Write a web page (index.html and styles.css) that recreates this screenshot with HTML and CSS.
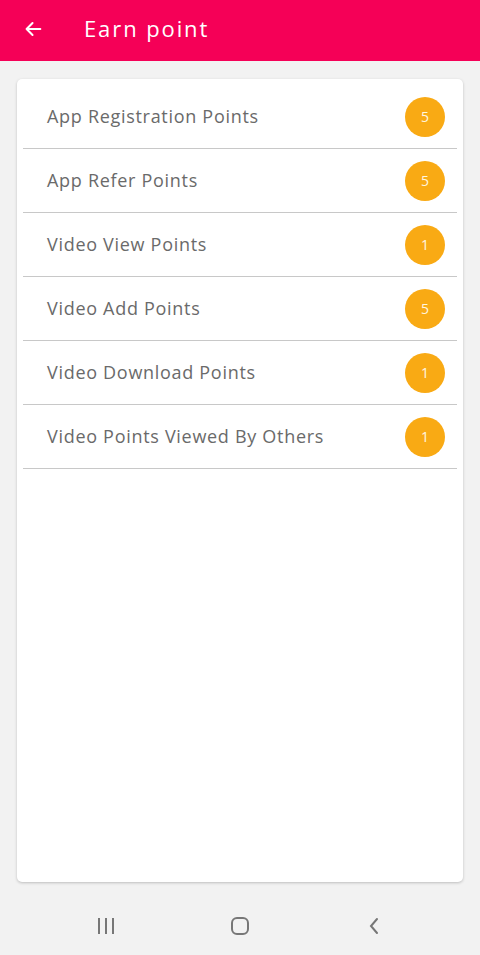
FILE: index.html
```html
<!DOCTYPE html>
<html lang="en">
<head>
    <meta charset="UTF-8">
    <meta name="viewport" content="width=device-width, initial-scale=1.0">
    <title>Earn point</title>
    <link rel="stylesheet" href="styles.css">
</head>
<body>
    <header class="toolbar">
        <svg class="back" width="22" height="22" viewBox="0 0 24 24">
            <path d="M20 12H5M11.5 5.5L5 12l6.5 6.5" fill="none" stroke="#fff" stroke-width="2.2" stroke-linecap="round" stroke-linejoin="round"/>
        </svg>
        <h1>Earn point</h1>
    </header>

    <main class="content">
        <div class="card">
            <div class="row">
                <span class="row-label">App Registration Points</span>
                <span class="badge">5</span>
            </div>
            <div class="row">
                <span class="row-label">App Refer Points</span>
                <span class="badge">5</span>
            </div>
            <div class="row">
                <span class="row-label">Video View Points</span>
                <span class="badge">1</span>
            </div>
            <div class="row">
                <span class="row-label">Video Add Points</span>
                <span class="badge">5</span>
            </div>
            <div class="row">
                <span class="row-label">Video Download Points</span>
                <span class="badge">1</span>
            </div>
            <div class="row">
                <span class="row-label">Video Points Viewed By Others</span>
                <span class="badge">1</span>
            </div>
        </div>
    </main>

    <nav class="navbar">
        <svg width="20" height="20" viewBox="0 0 20 20">
            <path d="M3 2v16M10 2v16M17 2v16" stroke="#777" stroke-width="2"/>
        </svg>
        <svg width="20" height="20" viewBox="0 0 20 20">
            <rect x="2" y="2" width="16" height="16" rx="5" fill="none" stroke="#777" stroke-width="2"/>
        </svg>
        <svg width="20" height="20" viewBox="0 0 20 20">
            <path d="M13 3l-6 7 6 7" fill="none" stroke="#777" stroke-width="2" stroke-linecap="round"/>
        </svg>
    </nav>
</body>
</html>
```

FILE: styles.css
```css
html {
    font-family: "Open Sans", "Liberation Sans", sans-serif;
    background-color: #f2f2f2;
}
body {
    margin: 0;
    height: 955px;
    display: flex;
    flex-direction: column;
}

.toolbar {
    height: 61px;
    flex-shrink: 0;
    background-color: #f50057;
    display: flex;
    align-items: center;
    padding: 0 22px;
    box-sizing: border-box;
}
.toolbar h1 {
    margin: -5px 0 0 40px;
    color: #ffffff;
    font-size: 22px;
    font-weight: 400;
    letter-spacing: 1.9px;
}
.back {
    margin-top: -3px;
}

.content {
    flex: 1;
    padding: 18px 17px 15px;
    display: flex;
}
.card {
    flex: 1;
    background-color: #ffffff;
    border-radius: 5px;
    box-shadow: 0 1px 3px rgba(0, 0, 0, 0.22);
    padding: 6px 6px 0;
}
.row {
    height: 63px;
    border-bottom: 1px solid #c8c8c8;
    display: flex;
    align-items: center;
    justify-content: space-between;
    padding: 0 12px 0 24px;
}
.row-label {
    font-size: 18px;
    color: #6a6a6a;
    letter-spacing: 0.7px;
    margin-top: -1px;
}
.badge {
    height: 40px;
    min-width: 40px;
    padding: 0 1px;
    box-sizing: border-box;
    border-radius: 20px;
    background-color: #f9aa14;
    color: #fff6e0;
    font-size: 14px;
    display: flex;
    align-items: center;
    justify-content: center;
}

.navbar {
    height: 58px;
    flex-shrink: 0;
    display: flex;
    justify-content: center;
    gap: 114px;
    align-items: center;
}
```
